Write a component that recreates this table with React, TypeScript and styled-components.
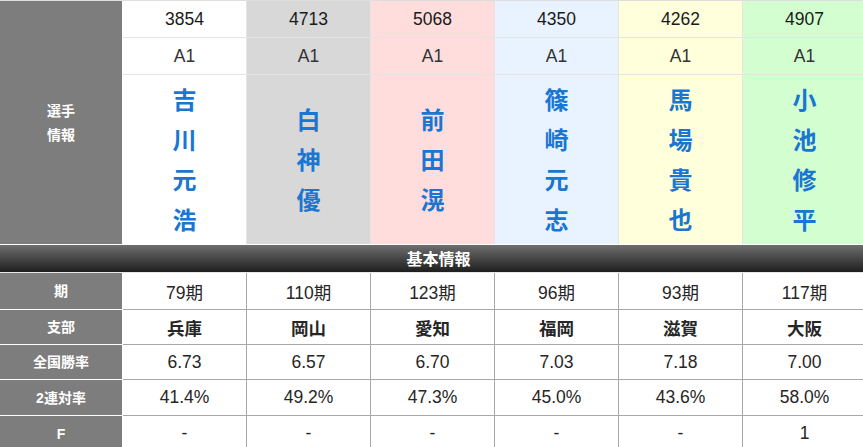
import styled, { createGlobalStyle } from "styled-components";

const GlobalStyle = createGlobalStyle`
  * { box-sizing: border-box; }
  body {
    margin: 0;
    overflow: hidden;
    background: #fff;
    font-family: "Liberation Sans", "Noto Sans CJK JP", sans-serif;
  }
`;

const COLORS = ["#ffffff", "#d8d8d8", "#ffdddd", "#e8f3ff", "#ffffdb", "#d3ffd0"];

const players = [
  { no: "3854", cls: "A1", name: "吉川元浩", ki: "79期", branch: "兵庫", rate: "6.73", ren: "41.4%", f: "-" },
  { no: "4713", cls: "A1", name: "白神優", ki: "110期", branch: "岡山", rate: "6.57", ren: "49.2%", f: "-" },
  { no: "5068", cls: "A1", name: "前田滉", ki: "123期", branch: "愛知", rate: "6.70", ren: "47.3%", f: "-" },
  { no: "4350", cls: "A1", name: "篠崎元志", ki: "96期", branch: "福岡", rate: "7.03", ren: "45.0%", f: "-" },
  { no: "4262", cls: "A1", name: "馬場貴也", ki: "93期", branch: "滋賀", rate: "7.18", ren: "43.6%", f: "-" },
  { no: "4907", cls: "A1", name: "小池修平", ki: "117期", branch: "大阪", rate: "7.00", ren: "58.0%", f: "1" },
];

const Table = styled.div`
  width: 867px;
  border-top: 1px solid #dedede;
`;

const Top = styled.div`
  display: grid;
  grid-template-columns: 123px repeat(6, 124px);
  grid-template-rows: 37px 37px 170px;
`;

const Label = styled.div<{ $span?: number }>`
  grid-row: ${(p) => (p.$span ? `1 / span ${p.$span}` : "auto")};
  width: 123px;
  flex-shrink: 0;
  display: flex;
  align-items: center;
  justify-content: center;
  text-align: center;
  background: #7d7d7d;
  color: #fff;
  font-weight: bold;
  font-size: 14px;
  line-height: 24px;
  border-right: 1px solid #fff;
  border-bottom: 1px solid #fff;
`;

const TopCell = styled.div<{ $bg: string }>`
  display: flex;
  align-items: center;
  justify-content: center;
  background: ${(p) => p.$bg};
  border-right: 1px solid #e4e4e4;
  border-bottom: 1px solid #e4e4e4;
  font-size: 17.5px;
  color: #1a1a1a;
`;

const ClassCell = styled(TopCell)`
  color: #333;
`;

const NameCell = styled(TopCell)`
  flex-direction: column;
  border-bottom: 1px solid #fff;
  padding-bottom: 2px;
`;

const NameChar = styled.span`
  font-family: "Noto Sans CJK JP", sans-serif;
  font-size: 24px;
  font-weight: bold;
  line-height: 40px;
  color: #1976d2;
`;

const Bar = styled.div`
  height: 28px;
  display: flex;
  align-items: center;
  justify-content: center;
  padding-left: 10px;
  padding-bottom: 1px;
  background: linear-gradient(#6e6e6e, #1e1e1e);
  border-bottom: 1px solid #e8e8e8;
  color: #fff;
  font-weight: bold;
  font-size: 16px;
`;

const Row = styled.div<{ $h: number }>`
  display: flex;
  height: ${(p) => p.$h}px;
`;

const Cell = styled.div<{ $bold?: boolean }>`
  width: 124px;
  flex-shrink: 0;
  display: flex;
  align-items: center;
  justify-content: center;
  border-right: 1px solid #a8a8a8;
  border-bottom: 1px solid #a8a8a8;
  font-size: 17.5px;
  font-weight: ${(p) => (p.$bold ? "bold" : "normal")};
  color: #262626;
`;

type Key = "ki" | "branch" | "rate" | "ren" | "f";

const rows: { label: string; key: Key; h: number; bold?: boolean }[] = [
  { label: "期", key: "ki", h: 37 },
  { label: "支部", key: "branch", h: 35, bold: true },
  { label: "全国勝率", key: "rate", h: 35 },
  { label: "2連対率", key: "ren", h: 36 },
  { label: "F", key: "f", h: 36 },
];

export default function App() {
  return (
    <>
      <GlobalStyle />
      <Table>
        <Top>
          <Label $span={3}>
            選手
            <br />
            情報
          </Label>
          {players.map((p, i) => (
            <TopCell key={"no" + i} $bg={COLORS[i]}>
              {p.no}
            </TopCell>
          ))}
          {players.map((p, i) => (
            <ClassCell key={"cls" + i} $bg={COLORS[i]}>
              {p.cls}
            </ClassCell>
          ))}
          {players.map((p, i) => (
            <NameCell key={"name" + i} $bg={COLORS[i]}>
              {p.name.split("").map((c, j) => (
                <NameChar key={j}>{c}</NameChar>
              ))}
            </NameCell>
          ))}
        </Top>
        <Bar>基本情報</Bar>
        {rows.map((r) => (
          <Row key={r.key} $h={r.h}>
            <Label>{r.label}</Label>
            {players.map((p, i) => (
              <Cell key={i} $bold={r.bold}>
                {p[r.key]}
              </Cell>
            ))}
          </Row>
        ))}
      </Table>
    </>
  );
}
